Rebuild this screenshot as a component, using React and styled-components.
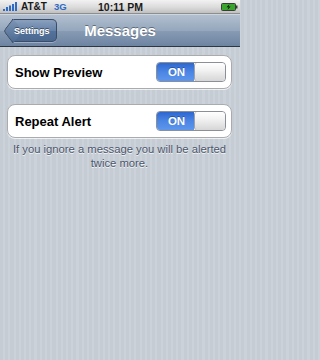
import styled, { createGlobalStyle } from 'styled-components';

const GlobalStyle = createGlobalStyle`
  html, body {
    margin: 0;
    padding: 0;
  }
  body {
    font-family: "Liberation Sans", Arial, sans-serif;
    background: repeating-linear-gradient(
      90deg,
      #c5ccd4 0px,
      #c5ccd4 3px,
      #cbd2d9 3px,
      #cbd2d9 5.25px
    );
  }
`;

const Screen = styled.div`
  width: 240px;
  height: 360px;
  overflow: hidden;
  display: flex;
  flex-direction: column;
  background: repeating-linear-gradient(
    90deg,
    #c5ccd4 0px,
    #c5ccd4 3px,
    #cbd2d9 3px,
    #cbd2d9 5.25px
  );
`;

const StatusBar = styled.div`
  height: 13px;
  display: grid;
  grid-template-columns: 1fr auto 1fr;
  align-items: center;
  padding: 0 2px 0 3px;
  background: linear-gradient(#f2f2f2, #d9d9d9 60%, #c0c0c0);
  border-bottom: 1px solid #8e8e8e;
  font-size: 10px;
  font-weight: bold;
  color: #1a1a1a;
`;

const Carrier = styled.div`
  display: flex;
  align-items: center;
  gap: 2px;
`;

const Network = styled.span`
  color: #2d6bc6;
  margin-left: 5px;
  font-size: 9.5px;
`;

const Clock = styled.div`
  text-align: center;
  font-size: 10.5px;
`;

const Battery = styled.div`
  display: flex;
  justify-content: flex-end;
`;

const NavBar = styled.div`
  height: 31px;
  display: grid;
  grid-template-columns: 1fr auto 1fr;
  align-items: center;
  padding: 0 4px;
  background: linear-gradient(#b2bfcf, #95a7bd 50%, #889bb3 51%, #6d84a2);
  border-top: 1px solid #cdd5df;
  border-bottom: 1px solid #2d3642;
`;

const BackButton = styled.div`
  justify-self: start;
  position: relative;
  height: 21px;
  margin-left: 8px;
  padding: 0 6px 0 2px;
  display: flex;
  align-items: center;
  color: #fff;
  font-size: 9px;
  font-weight: bold;
  text-shadow: 0 -1px 0 rgba(0, 0, 0, 0.45);
  background: linear-gradient(#8aa0bd, #6683a9 50%, #54729b 51%, #4a6890);
  border: 1px solid #3b4d66;
  border-left: none;
  border-radius: 0 5px 5px 0;
  box-shadow: 0 1px 0 rgba(255, 255, 255, 0.3);

  &::before {
    content: '';
    position: absolute;
    left: -7.5px;
    top: 2.5px;
    width: 15px;
    height: 15px;
    transform: rotate(45deg) skew(8deg, 8deg);
    background: linear-gradient(135deg, #7f97b7, #4a6890);
    border-left: 1px solid #3b4d66;
    border-bottom: 1px solid #3b4d66;
    border-radius: 0 0 0 3px;
  }
`;

const BackLabel = styled.span`
  position: relative;
`;

const Title = styled.div`
  color: #fff;
  font-size: 15px;
  font-weight: bold;
  text-shadow: 0 -1px 0 rgba(0, 0, 0, 0.4);
`;

const Content = styled.div`
  padding: 8px 8px 0 7px;
  display: flex;
  flex-direction: column;
`;

const Group = styled.div`
  margin-bottom: ${({ $gap }) => $gap || 0}px;
  background: #fff;
  border: 1px solid #a9abad;
  border-radius: 8px;
  box-shadow: 0 1px 0 rgba(255, 255, 255, 0.7);
`;

const Row = styled.div`
  height: 32px;
  display: flex;
  align-items: center;
  justify-content: space-between;
  padding: 0 5px 0 7px;
`;

const Label = styled.span`
  font-size: 13px;
  font-weight: bold;
  color: #000;
`;

const Switch = styled.div`
  width: 70px;
  height: 20px;
  display: flex;
  border: 1px solid #8b8f96;
  border-radius: 4px;
  overflow: hidden;
  box-sizing: border-box;
`;

const SwitchOn = styled.div`
  flex: 1;
  display: flex;
  align-items: center;
  justify-content: center;
  color: #fff;
  font-size: 11.5px;
  font-weight: bold;
  background: linear-gradient(#2d67d0, #4b86e4 50%, #5d96ec);
  text-shadow: 0 -1px 0 rgba(0, 0, 0, 0.3);
  padding-left: 2px;
`;

const Knob = styled.div`
  width: 30px;
  background: linear-gradient(#ffffff, #f2f2f2 40%, #d6d6d6);
  border-left: 1px solid #9da3ab;
  border-radius: 3px;
`;

const Footer = styled.p`
  margin: 4px 0 0;
  text-align: center;
  font-size: 11.25px;
  line-height: 14px;
  color: #4c566c;
  text-shadow: 0 1px 0 rgba(255, 255, 255, 0.8);
`;

const SignalIcon = () => (
  <svg width="16" height="9" viewBox="0 0 16 9">
    <rect x="0" y="7" width="2" height="2" fill="#2d6bc6" />
    <rect x="3" y="5" width="2" height="4" fill="#2d6bc6" />
    <rect x="6" y="3.5" width="2" height="5.5" fill="#2d6bc6" />
    <rect x="9" y="2" width="2" height="7" fill="#2d6bc6" />
    <rect x="12" y="0" width="2" height="9" fill="#2d6bc6" />
  </svg>
);

const BatteryIcon = () => (
  <svg width="17" height="8" viewBox="0 0 17 8">
    <rect x="0.5" y="0.5" width="14" height="7" rx="1" fill="#3aa52c" stroke="#3b3b3b" />
    <rect x="15" y="2.5" width="1.5" height="3" fill="#3b3b3b" />
    <path d="M8.5 1 L5.5 4.3 H7.6 L6.5 7 L9.6 3.6 H7.5 Z" fill="#111" />
  </svg>
);

const ToggleRow = ({ label }) => (
  <Row>
    <Label>{label}</Label>
    <Switch>
      <SwitchOn>ON</SwitchOn>
      <Knob />
    </Switch>
  </Row>
);

export default function App() {
  return (
    <Screen>
      <GlobalStyle />
      <StatusBar>
        <Carrier>
          <SignalIcon />
          <span>AT&amp;T</span>
          <Network>3G</Network>
        </Carrier>
        <Clock>10:11 PM</Clock>
        <Battery>
          <BatteryIcon />
        </Battery>
      </StatusBar>

      <NavBar>
        <BackButton>
          <BackLabel>Settings</BackLabel>
        </BackButton>
        <Title>Messages</Title>
        <div />
      </NavBar>

      <Content>
        <Group $gap={15}>
          <ToggleRow label="Show Preview" />
        </Group>
        <Group>
          <ToggleRow label="Repeat Alert" />
        </Group>
        <Footer>
          If you ignore a message you will be alerted
          <br />
          twice more.
        </Footer>
      </Content>
    </Screen>
  );
}
